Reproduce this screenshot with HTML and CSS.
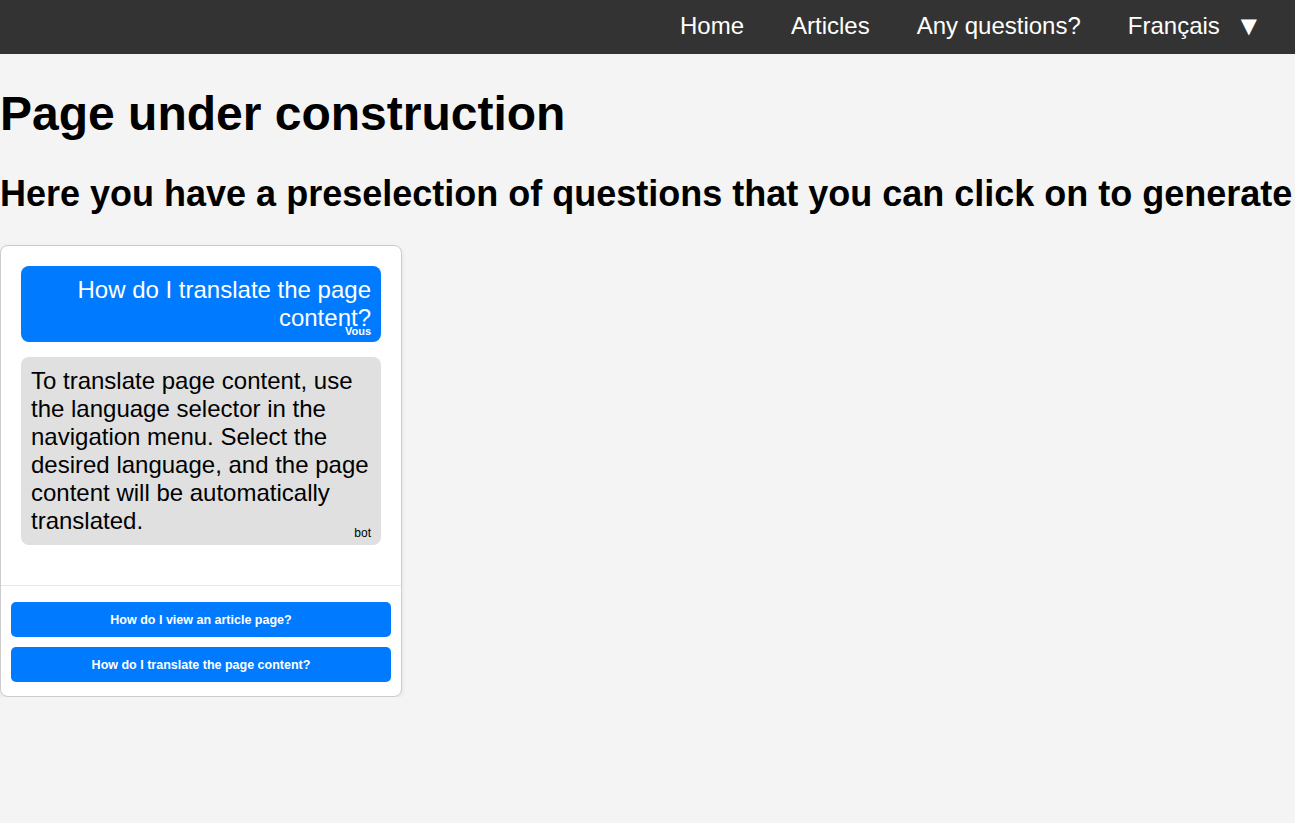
FILE: index.html
```html
<!DOCTYPE html>
<html lang="en">
<head>
<meta charset="utf-8">
<title>Page under construction</title>
<link rel="stylesheet" href="styles.css">
</head>
<body>
<nav class="navbar">
  <ul class="nav-list">
    <li><a class="nav-link" href="#">Home</a></li>
    <li><a class="nav-link" href="#">Articles</a></li>
    <li><a class="nav-link" href="#">Any questions?</a></li>
    <li class="lang"><span class="lang-label">Français</span><span class="lang-arrow">▼</span></li>
  </ul>
</nav>
<main class="content">
  <h1 class="title">Page under construction</h1>
  <h2 class="subtitle">Here you have a preselection of questions that you can click on to generate</h2>
  <section class="chat">
    <div class="messages">
      <div class="bubble user">How do I translate the page content?<span class="tag">Vous</span></div>
      <div class="bubble bot">To translate page content, use the language selector in the navigation menu. Select the desired language, and the page content will be automatically translated.<span class="tag">bot</span></div>
    </div>
    <div class="choices">
      <button class="choice">How do I view an article page?</button>
      <button class="choice">How do I translate the page content?</button>
    </div>
  </section>
</main>
</body>
</html>
```

FILE: styles.css
```css
html, body {
  margin: 0;
  padding: 0;
}
body {
  background: #f4f4f4;
  font-family: "Liberation Sans", Arial, sans-serif;
  color: #000;
  overflow-x: hidden;
}
.navbar {
  background: #333;
  height: 54px;
  box-sizing: border-box;
  padding: 12px 38px 0 0;
}
.nav-list {
  list-style: none;
  margin: 0;
  padding: 0;
  display: flex;
  justify-content: flex-end;
  gap: 47px;
}
.nav-link, .lang {
  color: #fff;
  text-decoration: none;
  font-size: 24px;
}
.lang {
  display: flex;
  align-items: center;
}
.lang-arrow {
  margin-left: 21px;
  font-family: "DejaVu Sans", sans-serif;
  font-size: 21px;
}
.content {
  padding: 0;
}
.title {
  font-size: 48px;
  font-weight: bold;
  margin: 32px 0;
}
.subtitle {
  font-size: 36px;
  font-weight: bold;
  margin: 30px 0;
  white-space: nowrap;
}
.chat {
  width: 400px;
  background: #fff;
  border: 1px solid #ccc;
  border-radius: 8px;
  box-shadow: 0 2px 5px rgba(0, 0, 0, 0.08);
  margin-top: 30px;
}
.messages {
  padding: 20px 20px 40px;
  display: flex;
  flex-direction: column;
  gap: 15px;
}
.bubble {
  position: relative;
  padding: 10px;
  border-radius: 8px;
  font-size: 24px;
}
.user {
  background: #007bff;
  color: #fff;
  text-align: right;
}
.bot {
  background: #e0e0e0;
  color: #000;
}
.tag {
  position: absolute;
  right: 10px;
  bottom: 5px;
  font-size: 12px;
}
.user .tag {
  font-weight: bold;
  font-size: 11px;
}
.choices {
  border-top: 1px solid #e6e6e6;
  padding: 16px 10px 14px;
  display: flex;
  flex-direction: column;
  gap: 10px;
}
.choice {
  background: #007bff;
  color: #fff;
  border: none;
  border-radius: 5px;
  height: 35px;
  padding: 0 10px;
  font-family: "Liberation Sans", Arial, sans-serif;
  font-weight: bold;
  font-size: 12.5px;
  cursor: pointer;
}
```
